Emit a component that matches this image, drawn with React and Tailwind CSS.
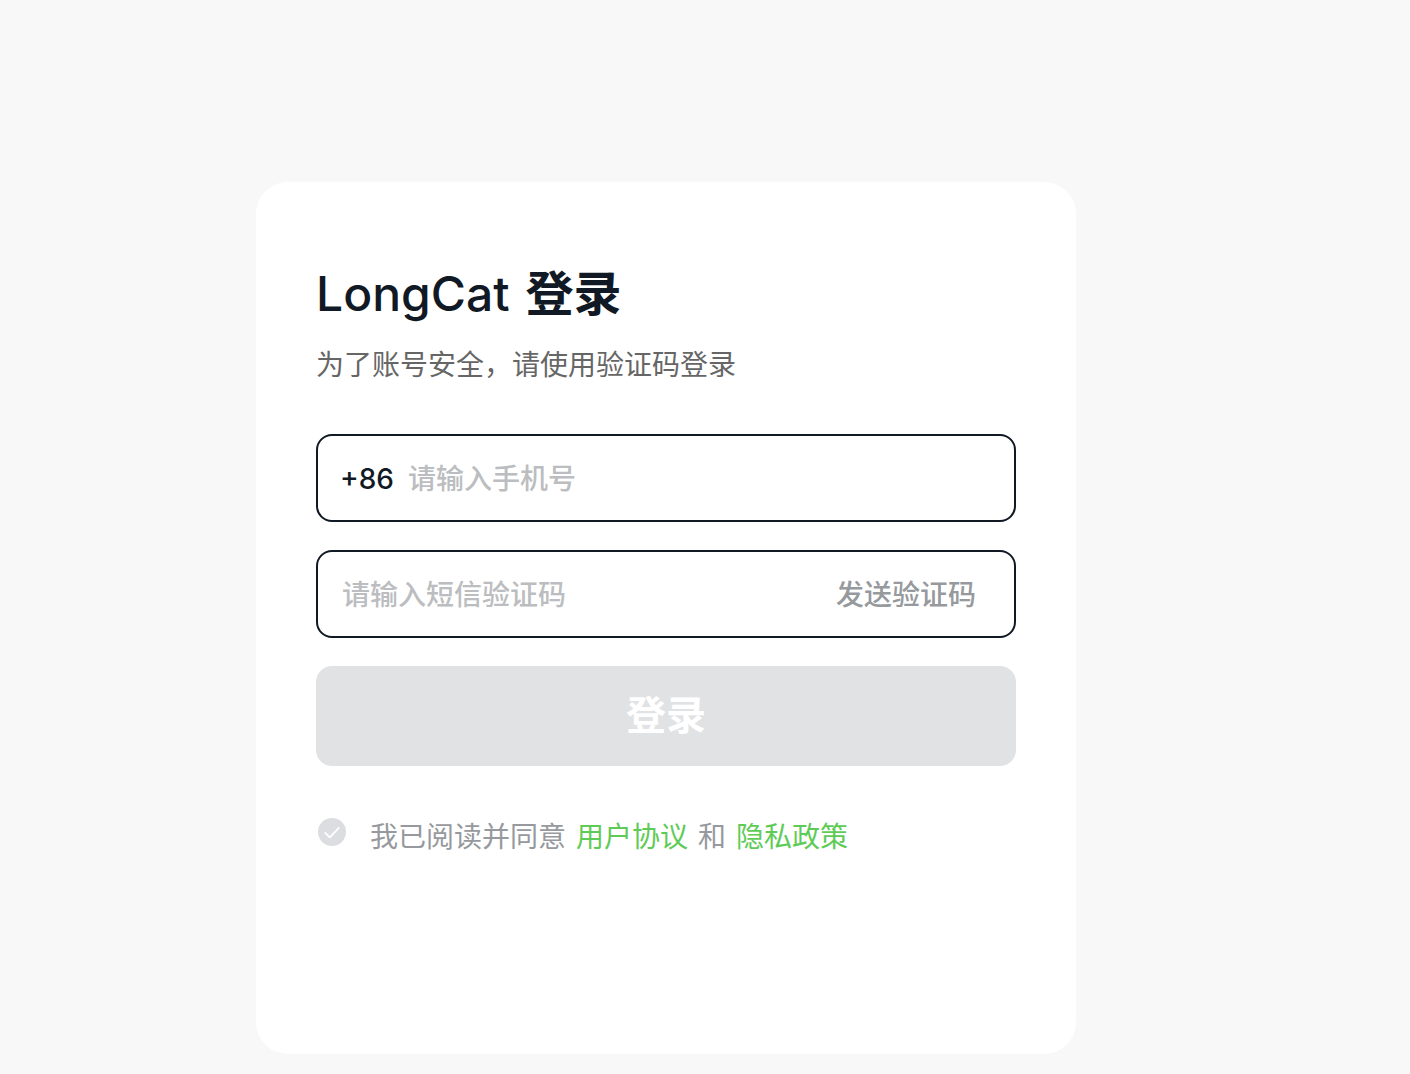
import React, { useState } from 'react'

function App() {
  const [form, setForm] = useState({ phone: "", code: "" })
  const [agreed, setAgreed] = useState(false)

  const handleChange = (e) => {
    setForm({ ...form, [e.target.name]: e.target.value })
  }

  return (
    <main className="min-h-screen bg-[#f8f8f8] pt-[182px] pr-[334px] pb-5 pl-64 font-['Inter','Noto_Sans_CJK_SC',sans-serif] text-[28px] leading-10">
      <form className="min-h-[872px] w-full rounded-[32px] bg-white px-[60px] pt-20" onSubmit={(e) => e.preventDefault()}>
        <h1 className="flex gap-4 text-5xl leading-[64px] font-medium text-[#111925]">
          <span>LongCat</span>
          <span className="font-bold">登录</span>
        </h1>
        <p className="mt-[19px] text-[#666666]">为了账号安全，请使用验证码登录</p>

        <div className="mt-[49px] flex h-[88px] items-center gap-3.5 rounded-2xl border-2 border-[#111925] px-[22px] pt-0.5 font-medium">
          <label htmlFor="phone" className="text-[#111925]">+86</label>
          <input
            id="phone"
            name="phone"
            type="tel"
            value={form.phone}
            onChange={handleChange}
            placeholder="请输入手机号"
            className="min-w-0 flex-1 text-[#111925] outline-none placeholder:text-[#bbbdc0]"
          />
        </div>

        <div className="mt-7 flex h-[88px] items-center rounded-2xl border-2 border-[#111925] pt-0.5 pr-[38px] pl-6 font-medium">
          <input
            id="code"
            name="code"
            type="text"
            aria-label="请输入短信验证码"
            value={form.code}
            onChange={handleChange}
            placeholder="请输入短信验证码"
            className="min-w-0 flex-1 text-[#111925] outline-none placeholder:text-[#bbbdc0]"
          />
          <button type="button" className="text-[#96999d]">发送验证码</button>
        </div>

        <button type="submit" className="mt-7 h-[100px] w-full rounded-2xl bg-[#e1e2e4] text-[40px] font-bold text-white">登录</button>

        <div className="mt-[51px] flex items-start gap-6 text-[#96999d]">
          <span className="relative mt-px ml-0.5 size-7 shrink-0">
            <input
              id="agree"
              type="checkbox"
              checked={agreed}
              onChange={(e) => setAgreed(e.target.checked)}
              className="block size-7 cursor-pointer appearance-none rounded-full bg-[#dcdde0] checked:bg-[#5fcb57]"
            />
            <svg viewBox="0 0 28 28" fill="none" stroke="white" strokeWidth="1.8" strokeLinecap="round" strokeLinejoin="round" className="pointer-events-none absolute inset-0 size-7">
              <path d="M7.2 14.8l4.6 4.6L20.8 9.8" />
            </svg>
          </span>
          <div className="flex flex-wrap gap-x-2.5">
            <label htmlFor="agree">我已阅读并同意</label>
            <a href="#terms" className="text-[#5fcb57]">用户协议</a>
            <span>和</span>
            <a href="#privacy" className="text-[#5fcb57]">隐私政策</a>
          </div>
        </div>
      </form>
    </main>
  )
}

export default App
